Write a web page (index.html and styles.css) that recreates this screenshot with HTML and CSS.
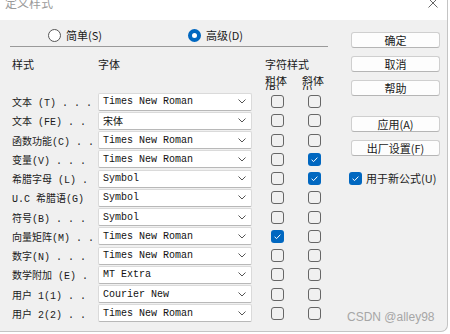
FILE: index.html
```html
<!DOCTYPE html>
<html lang="zh-CN">
<head>
  <meta charset="UTF-8" />
  <title>定义样式</title>
  <link rel="stylesheet" href="styles.css">
</head>
<body>
  <div class="dialog">
    <div class="titlebar">
      <span class="title">定义样式</span>
      <svg class="close" width="10" height="10" viewBox="0 0 10 10"><path d="M0.5 0.5 L9.5 9.5 M9.5 0.5 L0.5 9.5" stroke="#666" stroke-width="1" fill="none"/></svg>
    </div>
    <div class="body">
      <div class="left">
        <div class="modes">
          <label class="radio"><span class="dot"></span>简单(S)</label>
          <label class="radio on"><span class="dot"></span>高级(D)</label>
        </div>
        <div class="rule"></div>
        <div class="heads">
          <span class="h-style">样式</span>
          <span class="h-font">字体</span>
          <div class="h-char">
            <div>字符样式</div>
            <div class="subs"><span>粗体(B)</span><span>斜体(I)</span></div>
          </div>
        </div>
        <div class="rows">
          <div class="row"><span class="name">文本 (T) . . .</span><div class="sel">Times New Roman<svg class="chev" width="8" height="5" viewBox="0 0 8 5"><path d="M0.5 0.5 L4 4 L7.5 0.5"/></svg></div><span class="cb"></span><span class="cb"></span></div>
          <div class="row"><span class="name">文本 (FE) . .</span><div class="sel">宋体<svg class="chev" width="8" height="5" viewBox="0 0 8 5"><path d="M0.5 0.5 L4 4 L7.5 0.5"/></svg></div><span class="cb"></span><span class="cb"></span></div>
          <div class="row"><span class="name">函数功能(C) . . .</span><div class="sel">Times New Roman<svg class="chev" width="8" height="5" viewBox="0 0 8 5"><path d="M0.5 0.5 L4 4 L7.5 0.5"/></svg></div><span class="cb"></span><span class="cb"></span></div>
          <div class="row"><span class="name">变量(V) . . .</span><div class="sel">Times New Roman<svg class="chev" width="8" height="5" viewBox="0 0 8 5"><path d="M0.5 0.5 L4 4 L7.5 0.5"/></svg></div><span class="cb"></span><span class="cb on"><svg width="13" height="13" viewBox="0 0 13 13"><path d="M3.6 6.8 L5.6 8.6 L9.4 4.6"/></svg></span></div>
          <div class="row"><span class="name">希腊字母 (L) .</span><div class="sel">Symbol<svg class="chev" width="8" height="5" viewBox="0 0 8 5"><path d="M0.5 0.5 L4 4 L7.5 0.5"/></svg></div><span class="cb"></span><span class="cb on"><svg width="13" height="13" viewBox="0 0 13 13"><path d="M3.6 6.8 L5.6 8.6 L9.4 4.6"/></svg></span></div>
          <div class="row"><span class="name">U.C 希腊语(G)</span><div class="sel">Symbol<svg class="chev" width="8" height="5" viewBox="0 0 8 5"><path d="M0.5 0.5 L4 4 L7.5 0.5"/></svg></div><span class="cb"></span><span class="cb"></span></div>
          <div class="row"><span class="name">符号(B) . . .</span><div class="sel">Symbol<svg class="chev" width="8" height="5" viewBox="0 0 8 5"><path d="M0.5 0.5 L4 4 L7.5 0.5"/></svg></div><span class="cb"></span><span class="cb"></span></div>
          <div class="row"><span class="name">向量矩阵(M) . .</span><div class="sel">Times New Roman<svg class="chev" width="8" height="5" viewBox="0 0 8 5"><path d="M0.5 0.5 L4 4 L7.5 0.5"/></svg></div><span class="cb on"><svg width="13" height="13" viewBox="0 0 13 13"><path d="M3.6 6.8 L5.6 8.6 L9.4 4.6"/></svg></span><span class="cb"></span></div>
          <div class="row"><span class="name">数字(N) . . .</span><div class="sel">Times New Roman<svg class="chev" width="8" height="5" viewBox="0 0 8 5"><path d="M0.5 0.5 L4 4 L7.5 0.5"/></svg></div><span class="cb"></span><span class="cb"></span></div>
          <div class="row"><span class="name">数学附加 (E) .</span><div class="sel">MT Extra<svg class="chev" width="8" height="5" viewBox="0 0 8 5"><path d="M0.5 0.5 L4 4 L7.5 0.5"/></svg></div><span class="cb"></span><span class="cb"></span></div>
          <div class="row"><span class="name">用户 1(1) . .</span><div class="sel">Courier New<svg class="chev" width="8" height="5" viewBox="0 0 8 5"><path d="M0.5 0.5 L4 4 L7.5 0.5"/></svg></div><span class="cb"></span><span class="cb"></span></div>
          <div class="row"><span class="name">用户 2(2) . .</span><div class="sel">Times New Roman<svg class="chev" width="8" height="5" viewBox="0 0 8 5"><path d="M0.5 0.5 L4 4 L7.5 0.5"/></svg></div><span class="cb"></span><span class="cb"></span></div>
        </div>
      </div>
      <div class="right">
        <button class="btn">确定</button>
        <button class="btn">取消</button>
        <button class="btn">帮助</button>
        <button class="btn gap">应用(A)</button>
        <button class="btn">出厂设置(F)</button>
        <label class="newf"><span class="cb on"><svg width="13" height="13" viewBox="0 0 13 13"><path d="M3.6 6.8 L5.6 8.6 L9.4 4.6"/></svg></span>用于新公式(U)</label>
      </div>
    </div>
    <span class="mark">CSDN @alley98</span>
  </div>
</body>
</html>
```

FILE: styles.css
```css
body {
  margin: 0;
  background-color: #fff;
  font-family: "Noto Sans CJK SC", "DejaVu Sans", sans-serif;
  font-size: 11px;
  color: #1a1a1a;
}
.dialog {
  position: relative;
  width: 448px;
  height: 332px;
  box-sizing: border-box;
  border-right: 1px solid #c4c4c4;
  border-bottom: 1px solid #c4c4c4;
  border-bottom-right-radius: 7px;
  overflow: hidden;
  background-color: #f0f0f0;
}
.titlebar {
  height: 20px;
  background-color: #fff;
  display: flex;
  justify-content: space-between;
  align-items: flex-start;
  overflow: hidden;
}
.title {
  font-size: 12px;
  line-height: 12px;
  margin: -3px 0 0 5px;
  color: #9a9a9a;
}
.close {
  margin: -2px 9px 0 0;
}
.body {
  display: flex;
  padding: 8px 0 0 10px;
}
.left {
  width: 318px;
}
.modes {
  display: flex;
  height: 14px;
  padding-left: 38px;
}
.radio {
  display: flex;
  align-items: center;
  gap: 5px;
  width: 143px;
  line-height: 14px;
}
.dot {
  width: 13px;
  height: 13px;
  box-sizing: border-box;
  border: 1px solid #555;
  border-radius: 50%;
  background-color: #fff;
}
.radio.on .dot {
  border: 4px solid #0067c0;
  background-color: #fff;
}
.rule {
  height: 1px;
  margin-top: 4px;
  background-color: #9a9a9a;
}
.heads {
  display: flex;
  margin-top: 10px;
  line-height: 14px;
}
.h-style {
  width: 86px;
  padding-left: 2px;
}
.h-font {
  width: 168px;
}
.h-char {
  margin-left: -1px;
}
.subs {
  display: flex;
  gap: 15px;
  margin-top: 5px;
  height: 14px;
  line-height: 9px;
  overflow: hidden;
}
.subs span {
  width: 22px;
}
.rows {
  margin-top: 2px;
}
.row {
  display: flex;
  align-items: center;
  height: 19.25px;
}
.name {
  width: 86px;
  padding-left: 2px;
  white-space: pre;
  font-family: "Liberation Mono", "Noto Sans CJK SC", monospace;
  font-size: 10px;
}
.sel {
  position: relative;
  display: flex;
  align-items: center;
  justify-content: space-between;
  width: 154px;
  height: 18px;
  box-sizing: border-box;
  padding: 0 5px 0 4px;
  background-color: #fff;
  border: 1px solid #dadada;
  border-bottom-color: #b8b8b8;
  border-radius: 2px;
  font-family: "Liberation Mono", "Noto Sans CJK SC", monospace;
  font-size: 10px;
  color: #111;
}
.chev path {
  fill: none;
  stroke: #555;
  stroke-width: 1;
}
.cb {
  display: block;
  width: 13px;
  height: 13px;
  box-sizing: border-box;
  border: 1px solid #666;
  border-radius: 3px;
  margin-left: 19px;
  flex-shrink: 0;
}
.cb + .cb {
  margin-left: 24px;
}
.cb.on {
  border: none;
  background-color: #0067c0;
}
.cb svg {
  display: block;
}
.cb svg path {
  fill: none;
  stroke: #fff;
  stroke-width: 1;
}
.right {
  display: flex;
  flex-direction: column;
  gap: 8px;
  width: 89px;
  margin-left: 23px;
  padding-top: 4px;
}
.btn {
  height: 16px;
  padding: 0;
  background-color: #fdfdfd;
  border: 1px solid #cfcfcf;
  border-bottom-color: #b5b5b5;
  border-radius: 3px;
  font-family: "Noto Sans CJK SC", sans-serif;
  font-size: 11px;
  line-height: 14px;
  color: #1a1a1a;
}
.btn.gap {
  margin-top: 12px;
}
.newf {
  display: flex;
  align-items: center;
  gap: 4px;
  margin: 6px 0 0 -2px;
  white-space: nowrap;
}
.newf .cb {
  margin-left: 0;
}
.mark {
  position: absolute;
  left: 347px;
  top: 310px;
  font-family: "Liberation Sans", sans-serif;
  font-size: 12px;
  color: #a6a6a6;
}
```
